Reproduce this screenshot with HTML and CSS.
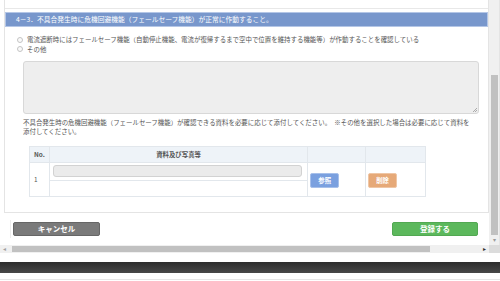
FILE: index.html
```html
<!DOCTYPE html>
<html lang="ja">
<head>
    <meta charset="UTF-8">
    <meta name="viewport" content="width=device-width, initial-scale=1.0">
    <title>危機回避機能の確認</title>
    <link rel="stylesheet" href="styles.css">
</head>
<body>

    <div class="frame">
        <div class="viewport">
            <div class="content">
                <div class="panel">
                    <div class="prevSection"></div>
                    <div class="sectionHead">4－3．不具合発生時に危機回避機能（フェールセーフ機能）が正常に作動すること。</div>

                    <div class="sectionBody">
                        <label class="radioRow">
                            <span class="radio"></span>
                            電流遮断時にはフェールセーフ機能（自動停止機能、電流が復帰するまで空中で位置を維持する機能等）が作動することを確認している
                        </label>
                        <label class="radioRow">
                            <span class="radio"></span>
                            その他
                        </label>

                        <div class="memo"><span class="grip"></span></div>

                        <p class="note">不具合発生時の危機回避機能（フェールセーフ機能）が確認できる資料を必要に応じて添付してください。　※その他を選択した場合は必要に応じて資料を添付してください。</p>

                        <table class="files">
                            <tr>
                                <th class="colNo">No.</th>
                                <th class="colName">資料及び写真等</th>
                                <th class="colBtn"></th>
                                <th class="colBtn2"></th>
                            </tr>
                            <tr>
                                <td class="num">1</td>
                                <td class="fileCell">
                                    <div class="fileTop"><div class="fileInput"></div></div>
                                    <div class="fileBottom"></div>
                                </td>
                                <td class="btnCell"><span class="smallBtn ref">参照</span></td>
                                <td class="btnCell"><span class="smallBtn del">削除</span></td>
                            </tr>
                        </table>
                    </div>
                </div>

                <div class="footer">
                    <button class="bigBtn cancel">キャンセル</button>
                    <button class="bigBtn save">登録する</button>
                </div>
            </div>

            <div class="vbar">
                <div class="vthumb"></div>
                <div class="varrow">&#9662;</div>
            </div>
        </div>

        <div class="hbar">
            <div class="harrow">&#9666;</div>
            <div class="hthumb"></div>
            <div class="htrack"></div>
            <div class="harrow right">&#9656;</div>
            <div class="corner"></div>
        </div>

        <div class="gap"></div>
        <div class="darkbar"></div>
        <div class="bottomLine"></div>
    </div>

</body>
</html>
```

FILE: styles.css
```css
*{
    box-sizing: border-box;
}

body{
    margin: 0;
    width: 500px;
    height: 281px;
    overflow: hidden;
    background: #fff;
    font-family: "Noto Sans CJK JP", "Liberation Sans", sans-serif;
    color: #444;
}

.frame{
    display: flex;
    flex-direction: column;
}

.viewport{
    display: flex;
    height: 245px;
}

.content{
    width: 489px;
    height: 245px;
    overflow: hidden;
    padding-left: 4px;
}

.panel{
    width: 485px;
    height: 213px;
    border: 1px solid #e4e4e4;
    border-top: none;
}

.prevSection{
    height: 9px;
    border-bottom: 1px solid #e8e8e8;
}

.sectionHead{
    margin-top: 3px;
    height: 15px;
    background-color: #7897cc;
    border: 1px solid #b4c6e6;
    color: #fff;
    font-size: 6.75px;
    line-height: 13px;
    padding-left: 10px;
    white-space: nowrap;
}

.sectionBody{
    padding-left: 12px;
}

.radioRow{
    display: flex;
    align-items: center;
    height: 9.5px;
    font-size: 6.45px;
    white-space: nowrap;
    color: #555;
}

.radioRow:first-child{
    margin-top: 8px;
}

.radio{
    width: 6px;
    height: 6px;
    border: 1px solid #c4c4c4;
    border-radius: 50%;
    background: #fafafa;
    margin-right: 4px;
}

.memo{
    position: relative;
    margin: 6.5px 0 0 6px;
    width: 456px;
    height: 53px;
    background: #eeeeee;
    border: 1px solid #d8d8d8;
    border-radius: 3px;
}

.grip{
    position: absolute;
    right: 1px;
    bottom: 1px;
    width: 4px;
    height: 4px;
    background: linear-gradient(135deg, transparent 45%, #aaa 45%, #aaa 55%, transparent 55%, transparent 75%, #aaa 75%, #aaa 85%, transparent 85%);
}

.note{
    margin: 4px 0 0 6px;
    width: 452px;
    font-size: 6.45px;
    line-height: 9px;
    color: #555;
}

.files{
    margin: 10px 0 0 12px;
    width: 397px;
    border-collapse: collapse;
    font-size: 6.4px;
}

.files th, .files td{
    border: 1px solid #e2e7ec;
    padding: 0;
}

.files th{
    height: 16px;
    background-color: #eef3f8;
    color: #555;
    font-weight: bold;
}

.colNo{
    width: 20px;
}

.colName{
    width: 259px;
}

.colBtn{
    width: 58px;
}

.colBtn2{
    width: 60px;
}

.num{
    padding-left: 4px !important;
    color: #555;
}

.fileTop{
    height: 18px;
    padding: 2px 5px 0 3px;
    border-bottom: 1px solid #e2e7ec;
}

.fileInput{
    height: 12px;
    background: #ebebeb;
    border: 1px solid #d2d2d2;
    border-radius: 3px;
}

.fileBottom{
    height: 15px;
}

.btnCell{
    padding: 0 0 0 2px !important;
}

.smallBtn{
    display: inline-block;
    width: 29px;
    height: 15px;
    border-radius: 2px;
    color: #fff;
    font-size: 6.4px;
    font-weight: bold;
    line-height: 15px;
    text-align: center;
    margin-top: 3px;
}

.ref{
    background-color: #7aa0df;
    border: 1px solid #a7c0ea;
    line-height: 13px;
}

.del{
    background-color: #e6a978;
    border: 1px solid #efc6a5;
    line-height: 13px;
}

.footer{
    display: flex;
    justify-content: space-between;
    margin: 7px 0 0 6px;
    width: 468px;
    padding: 2px 0 2px 2px;
    border-left: 1px solid #ededed;
}

.bigBtn{
    width: 87px;
    height: 14px;
    border-radius: 2px;
    color: #fff;
    font-family: "Noto Sans CJK JP", sans-serif;
    font-size: 7.5px;
    font-weight: bold;
    line-height: 12px;
    padding: 0;
}

.cancel{
    background-color: #7a7a7a;
    border: 1px solid #666;
}

.save{
    width: 86px;
    background-color: #5cb85c;
    border: 1px solid #52a852;
}

.vbar{
    width: 11px;
    height: 245px;
    background: #f0f0f0;
    border-right: 1px solid #e4e4e4;
    display: flex;
    flex-direction: column;
    align-items: center;
    padding-top: 75px;
}

.vthumb{
    width: 7px;
    height: 160px;
    background: #c1c1c1;
}

.varrow{
    font-size: 6px;
    line-height: 9px;
    color: #9a9a9a;
}

.hbar{
    display: flex;
    height: 8px;
    background: #f0f0f0;
    align-items: center;
}

.harrow{
    width: 9px;
    font-size: 6px;
    line-height: 8px;
    text-align: center;
    color: #a0a0a0;
}

.harrow.right{
    color: #333;
    margin-left: 47px;
    width: 9px;
}

.hthumb{
    margin-left: 3px;
    width: 418px;
    height: 6px;
    background: #c1c1c1;
}

.htrack{
    flex: 1;
}

.corner{
    width: 11px;
    height: 8px;
    background: #dcdcdc;
}

.gap{
    height: 9px;
}

.darkbar{
    height: 11px;
    background: linear-gradient(#2c2c2c, #484848);
}

.bottomLine{
    margin-top: 6px;
    height: 1px;
    background: #e6e6e6;
}
```
